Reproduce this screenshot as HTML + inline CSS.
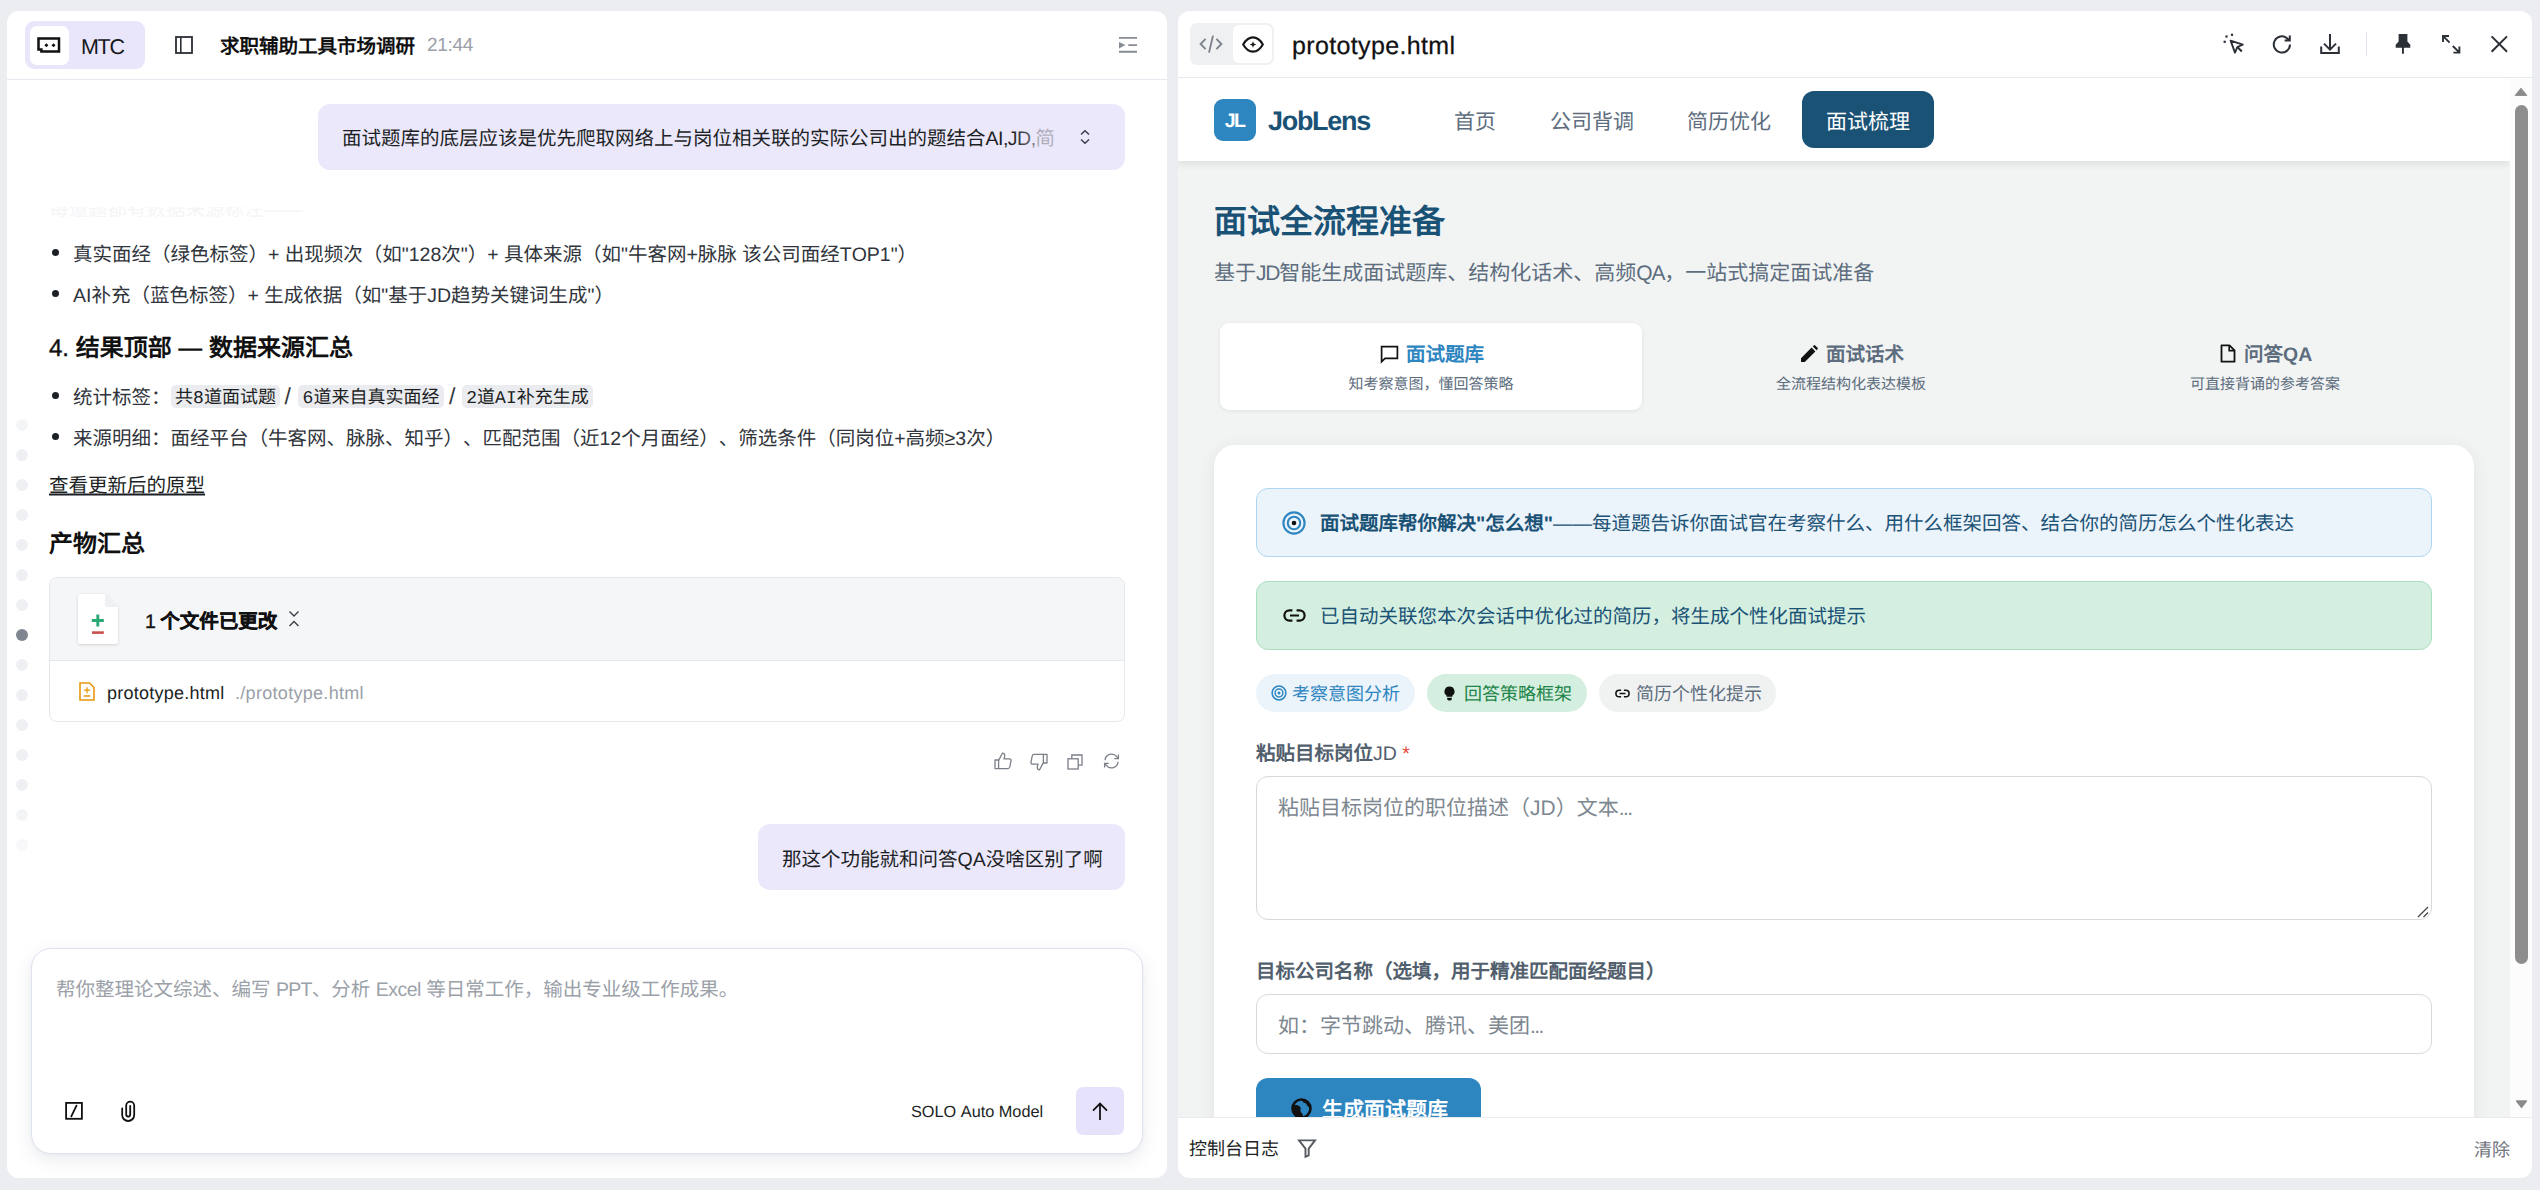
<!DOCTYPE html>
<html lang="zh-CN">
<head>
<meta charset="utf-8">
<title>prototype</title>
<style>
*{box-sizing:border-box;margin:0;padding:0}
html,body{width:2540px;height:1190px;overflow:hidden}
body{text-rendering:geometricPrecision;text-spacing-trim:space-all;font-kerning:none;background:#ecedf1;font-family:"Liberation Sans",sans-serif;color:#1f2329;position:relative}
.abs{position:absolute}
.t{position:absolute;white-space:nowrap;transform:translateY(1.5px)}
svg{position:absolute;overflow:visible}
#L{position:absolute;left:7px;top:11px;width:1160px;height:1167px;background:#fff;border-radius:12px;overflow:hidden}
#R{position:absolute;left:1178px;top:11px;width:1354px;height:1167px;background:#fff;border-radius:12px;overflow:hidden}
/* coordinates inside #L and #R are page coordinates via wrappers */
#Lw{position:absolute;left:-7px;top:-11px;width:2540px;height:1190px}
#Rw{position:absolute;left:-1178px;top:-11px;width:2540px;height:1190px}
.b{font-weight:bold}

.p{height:30px;line-height:30px;font-size:19.5px;color:#30343b}
.dot{width:7px;height:7px;border-radius:4px;background:#1c1f24}
.code{top:384.5px;height:23.5px;line-height:29px;overflow:hidden;border-radius:5px;background:#ebecef;font-family:"Liberation Mono",monospace;font-size:18px;color:#1c1f24;text-align:center;white-space:nowrap}

.nav{top:106px;height:30px;line-height:30px;font-size:21px;color:#5d6d7e}
.tsub{top:372px;height:22px;line-height:22px;font-size:15px;color:#5d6d7e;text-align:center}
.chip{top:674px;height:37.5px;border-radius:19px}
.ct{top:676.5px;height:30px;line-height:30px;font-size:18px}
.lab{height:30px;line-height:30px;font-size:19.5px;color:#52606e}
.ph{height:32px;line-height:32px;font-size:21px;color:#7d8790}
</style>
</head>
<body>
<div id="L"><div id="Lw">
<!-- header -->
<div class="abs" style="left:7px;top:79px;width:1160px;height:1px;background:#e7e9f0"></div>
<div class="abs" style="left:25px;top:21px;width:120px;height:48px;border-radius:9px;background:#e9e6fc"></div>
<div class="abs" style="left:30px;top:26px;width:39px;height:39px;border-radius:7px;background:#fff"></div>
<svg style="left:36px;top:35px" width="26" height="20" viewBox="0 0 26 20"><path d="M2.5 3.4H23V16.6H5.4V14.4H2.5Z" fill="none" stroke="#111" stroke-width="2.5"/><path d="M10.4 8.3l2 2-2 2-2-2zM17.5 8.3l2 2-2 2-2-2z" fill="#111"/></svg>
<div class="t" style="left:81px;top:29.6px;height:30px;line-height:30px;font-size:21.5px;letter-spacing:-1.3px;color:#15171a">MTC</div>
<svg style="left:175px;top:36px" width="18" height="18" viewBox="0 0 18 18"><rect x="1" y="1" width="16" height="16" fill="none" stroke="#2b2f36" stroke-width="1.8"/><path d="M5.8 1V17" stroke="#2b2f36" stroke-width="1.6"/></svg>
<div class="t b" style="left:220px;top:29.5px;height:30px;line-height:30px;font-size:19.5px;color:#111">求职辅助工具市场调研</div>
<div class="t" style="left:427px;top:29.3px;height:30px;line-height:30px;font-size:19px;color:#9a9fa8;letter-spacing:-0.3px">21:44</div>
<svg style="left:1118px;top:36px" width="20" height="18" viewBox="0 0 20 18"><path d="M1 1.9H19M10.3 9.1H19M1 15.8H19" stroke="#868b94" stroke-width="1.9" fill="none"/><path d="M1 5.9L7.4 9.1 1 12.4Z" fill="#868b94"/></svg>

<!-- user bubble 1 -->
<div class="abs" style="left:318px;top:104px;width:807px;height:66px;border-radius:12px;background:#ebe8fc"></div>
<div class="t" style="left:342px;top:122px;height:30px;line-height:30px;font-size:19.5px;color:#1c1f24;width:712px;overflow:hidden">面试题库的底层应该是优先爬取网络上与岗位相关联的实际公司出的题结合<span style="letter-spacing:-0.5px">AI,JD,</span>简</div>
<div class="abs" style="left:1012px;top:122px;width:44px;height:32px;background:linear-gradient(90deg,rgba(235,232,252,0),rgba(235,232,252,0.35) 45%,rgba(235,232,252,0.68) 60%,rgba(235,232,252,0.72))"></div>
<svg style="left:1079px;top:129px" width="12" height="16" viewBox="0 0 12 16"><path d="M2 5.5L6 1.8 10 5.5M2 10.5L6 14.2 10 10.5" fill="none" stroke="#3a3e46" stroke-width="1.5"/></svg>

<!-- faded remnant line -->
<div class="abs" style="left:49px;top:207px;width:300px;height:10px;overflow:hidden"><div class="t" style="left:0;top:-14px;height:30px;line-height:30px;font-size:19.5px;color:#f5f5f7">每道题都有数据来源标注——</div></div>

<!-- bullets -->
<div class="abs dot" style="left:52px;top:249px"></div>
<div class="t p" style="left:73px;top:238px">真实面经（绿色标签）+ 出现频次（如"128次"）+ 具体来源（如"牛客网+脉脉 该公司面经TOP1"）</div>
<div class="abs dot" style="left:52px;top:290px"></div>
<div class="t p" style="left:73px;top:279px">AI补充（蓝色标签）+ 生成依据（如"基于JD趋势关键词生成"）</div>

<div class="t b" style="left:49px;top:330px;height:34px;line-height:34px;font-size:24px;color:#111"><span style="font-weight:normal;-webkit-text-stroke:0.4px #111">4.</span> 结果顶部 — 数据来源汇总</div>

<div class="abs dot" style="left:52px;top:392px"></div>
<div class="t p" style="left:73px;top:381px">统计标签：</div>
<div class="abs code" style="left:171px;width:109px">共8道面试题</div>
<div class="t p" style="left:284.5px;top:379px;font-size:23px;color:#33373e">/</div>
<div class="abs code" style="left:298px;width:146px">6道来自真实面经</div>
<div class="t p" style="left:449px;top:379px;font-size:23px;color:#33373e">/</div>
<div class="abs code" style="left:462px;width:131px">2道AI补充生成</div>

<div class="abs dot" style="left:52px;top:433px"></div>
<div class="t p" style="left:73px;top:422px">来源明细：面经平台（牛客网、脉脉、知乎）、匹配范围（近12个月面经）、筛选条件（同岗位+高频≥3次）</div>

<div class="t p" style="left:49px;top:469px;text-decoration:underline;text-underline-offset:1.5px;text-decoration-thickness:1.6px;color:#1c1f24">查看更新后的原型</div>

<div class="t b" style="left:49px;top:526px;height:34px;line-height:34px;font-size:24px;color:#111">产物汇总</div>

<!-- file card -->
<div class="abs" style="left:49px;top:577px;width:1076px;height:145px;border:1px solid #e4e7ee;border-radius:8px;background:#fff;overflow:hidden">
  <div class="abs" style="left:0;top:0;width:1077px;height:83px;background:#f5f6f8;border-bottom:1px solid #e4e7ee"></div>
</div>
<svg style="left:78px;top:594px" width="40" height="50" viewBox="0 0 40 50"><defs><filter id="fs" x="-30%" y="-30%" width="160%" height="160%"><feDropShadow dx="0" dy="1" stdDeviation="1.6" flood-color="#000" flood-opacity="0.16"/></filter></defs><path d="M3 0H27L40 13V47Q40 50 37 50H3Q0 50 0 47V3Q0 0 3 0Z" fill="#fff" filter="url(#fs)"/><path d="M27 0L40 13H30Q27 13 27 10Z" fill="#eef0f3"/><path d="M13.8 26.5H25.8M19.8 20.5V32.5" stroke="#2aa876" stroke-width="2.9"/><path d="M14 38.6H25.8" stroke="#c9504e" stroke-width="2.6"/></svg>
<div class="t b" style="left:145px;top:605px;height:30px;line-height:30px;font-size:19.5px;color:#111;-webkit-text-stroke:0.35px #111"><span style="font-weight:normal;letter-spacing:-1px">1</span> 个文件已更改</div>
<svg style="left:288px;top:610px" width="12" height="18" viewBox="0 0 12 18"><path d="M1.5 1.5L6 6 10.5 1.5M1.5 16L6 11.5 10.5 16" fill="none" stroke="#3a3e46" stroke-width="1.4"/></svg>

<svg style="left:79px;top:682px" width="16" height="19" viewBox="0 0 16 19"><path d="M1 1H10.5L15 5.5V18H1Z" fill="none" stroke="#e8960c" stroke-width="1.6"/><path d="M4.8 8.2H11.2M8 5.2V11.2M4.8 14H11.2" stroke="#e8960c" stroke-width="1.3"/></svg>
<div class="t" style="left:107px;top:676px;height:30px;line-height:30px;font-size:18px;letter-spacing:0.25px;color:#1c1f24">prototype.html</div>
<div class="t" style="left:235px;top:676px;height:30px;line-height:30px;font-size:18px;letter-spacing:0.3px;color:#9a9fa8">./prototype.html</div>

<!-- action icons -->
<svg style="left:993.5px;top:752px" width="18" height="18" viewBox="0 0 18 18" fill="none" stroke="#7a7f88" stroke-width="1.3" stroke-linejoin="round"><path d="M1 8H4.6V16.6H1Z"/><path d="M4.6 8.4L8.4 1.2C10.4 1.2 11 2.8 10.6 4.4L10 6.8H15.4C16.6 6.8 17.2 7.8 17 8.8L15.8 15C15.6 16 14.8 16.6 13.8 16.6H4.6"/></svg>
<svg style="left:1029.5px;top:752.5px" width="18" height="18" viewBox="0 0 18 18" fill="none" stroke="#7a7f88" stroke-width="1.3" stroke-linejoin="round"><g transform="rotate(180 9 9)"><path d="M1 8H4.6V16.6H1Z"/><path d="M4.6 8.4L8.4 1.2C10.4 1.2 11 2.8 10.6 4.4L10 6.8H15.4C16.6 6.8 17.2 7.8 17 8.8L15.8 15C15.6 16 14.8 16.6 13.8 16.6H4.6"/></g></svg>
<svg style="left:1066.5px;top:753.5px" width="16" height="16" viewBox="0 0 16 16" fill="none" stroke="#7a7f88" stroke-width="1.3"><path d="M4.8 4.8V1H15V11.2H11.2"/><rect x="1" y="4.8" width="10.2" height="10.2"/></svg>
<svg style="left:1102.5px;top:753px" width="17" height="16" viewBox="0 0 17 16" fill="none" stroke="#7a7f88" stroke-width="1.3"><path d="M2 7.2A6.5 6.5 0 0 1 13.6 3.6L15.2 5.4M15.4 1.4V5.6H11.2"/><path d="M15 8.8A6.5 6.5 0 0 1 3.4 12.4L1.8 10.6M1.6 14.6V10.4H5.8"/></svg>

<!-- user bubble 2 -->
<div class="abs" style="left:758px;top:824px;width:367px;height:66px;border-radius:12px;background:#ebe8fc"></div>
<div class="t" style="left:782px;top:843px;height:30px;line-height:30px;font-size:19.5px;color:#1c1f24">那这个功能就和问答QA没啥区别了啊</div>

<!-- side dots -->
<div class="abs" style="left:16px;top:419px;width:12px;height:12px;border-radius:6px;background:#f4f5f7"></div><div class="abs" style="left:16px;top:449px;width:12px;height:12px;border-radius:6px;background:#eff0f3"></div><div class="abs" style="left:16px;top:479px;width:12px;height:12px;border-radius:6px;background:#eff0f3"></div><div class="abs" style="left:16px;top:509px;width:12px;height:12px;border-radius:6px;background:#eff0f3"></div><div class="abs" style="left:16px;top:539px;width:12px;height:12px;border-radius:6px;background:#eff0f3"></div><div class="abs" style="left:16px;top:569px;width:12px;height:12px;border-radius:6px;background:#eff0f3"></div><div class="abs" style="left:16px;top:599px;width:12px;height:12px;border-radius:6px;background:#eff0f3"></div><div class="abs" style="left:16px;top:629px;width:12px;height:12px;border-radius:6px;background:#7f8591"></div><div class="abs" style="left:16px;top:659px;width:12px;height:12px;border-radius:6px;background:#eff0f3"></div><div class="abs" style="left:16px;top:689px;width:12px;height:12px;border-radius:6px;background:#eff0f3"></div><div class="abs" style="left:16px;top:719px;width:12px;height:12px;border-radius:6px;background:#eff0f3"></div><div class="abs" style="left:16px;top:749px;width:12px;height:12px;border-radius:6px;background:#eff0f3"></div><div class="abs" style="left:16px;top:779px;width:12px;height:12px;border-radius:6px;background:#eff0f3"></div><div class="abs" style="left:16px;top:809px;width:12px;height:12px;border-radius:6px;background:#f3f4f6"></div><div class="abs" style="left:16px;top:839px;width:12px;height:12px;border-radius:6px;background:#f8f8fa"></div>

<!-- bottom fade + input -->
<div class="abs" style="left:7px;top:905px;width:1160px;height:45px;background:linear-gradient(180deg,rgba(255,255,255,0),#fff)"></div>
<div class="abs" style="left:31px;top:948px;width:1112px;height:206px;border:1px solid #dfe3ef;border-radius:20px;background:#fff;box-shadow:0 6px 18px rgba(60,70,110,0.10),0 1px 3px rgba(60,70,110,0.05)"></div>
<div class="t" style="left:56px;top:973px;height:30px;line-height:30px;font-size:19.5px;color:#9ba1a9">帮你整理论文综述、编写 <span style="letter-spacing:-0.7px">PPT</span>、分析 <span style="letter-spacing:-0.5px">Excel</span> 等日常工作，输出专业级工作成果。</div>
<svg style="left:64px;top:1101px" width="20" height="20" viewBox="0 0 20 20"><rect x="2.1" y="1.9" width="15.8" height="15.9" fill="none" stroke="#111" stroke-width="1.8"/><path d="M12.5 4.6L7.3 15.4" stroke="#111" stroke-width="1.8" stroke-linecap="round"/></svg>
<svg style="left:120px;top:1099px" width="16" height="24" viewBox="0 0 16 24" fill="none" stroke="#111" stroke-width="1.8" stroke-linecap="round"><g transform="translate(16.2,0) scale(-1,1)"><path d="M14 9.5V16A6 6 0 0 1 2 16V6.6A4 4 0 0 1 10 6.6V15.6A2 2 0 0 1 6 15.6V6.8"/></g></svg>
<div class="t" style="left:911px;top:1095px;height:30px;line-height:30px;font-size:16.3px;color:#1c1f24">SOLO Auto Model</div>
<div class="abs" style="left:1076px;top:1087px;width:48px;height:48px;border-radius:7px;background:#e6e2fc"></div>
<svg style="left:1091px;top:1102px" width="18" height="19" viewBox="0 0 18 19" fill="none" stroke="#111" stroke-width="1.8"><path d="M9 18V2M2 8.6L9 1.6 16 8.6"/></svg>

</div></div>
<div id="R"><div id="Rw">
<!-- iframe content area -->
<div class="abs" style="left:1177px;top:79px;width:1333px;height:1038px;background:#f2f4f4;overflow:hidden" id="ifr">
 <div id="ifw" class="abs" style="left:-1177px;top:-79px;width:2540px;height:1190px">
  <!-- app nav -->
  <div class="abs" style="left:1177px;top:79px;width:1333px;height:82px;background:#fff;box-shadow:0 2px 9px rgba(0,0,0,0.10)"></div>
  <div class="abs" style="left:1214px;top:99px;width:42px;height:42px;border-radius:9px;background:#2e86c1"></div>
  <div class="t b" style="left:1213.5px;top:98px;width:42px;height:42px;line-height:42px;text-align:center;font-size:19.5px;color:#fff;letter-spacing:-1.6px">JL</div>
  <div class="t b" id="logo" style="left:1268px;top:98px;height:42px;line-height:42px;font-size:27px;color:#1a5276;letter-spacing:-1.3px">JobLens</div>
  <div class="t nav" style="left:1454px">首页</div>
  <div class="t nav" style="left:1550px">公司背调</div>
  <div class="t nav" style="left:1687px">简历优化</div>
  <div class="abs" style="left:1802px;top:91px;width:132px;height:57px;border-radius:12px;background:#1a5276"></div>
  <div class="t nav" style="left:1826px;color:#fff">面试梳理</div>

  <!-- heading -->
  <div class="t b" style="left:1214px;top:197px;height:46px;line-height:46px;font-size:33px;color:#1a5276">面试全流程准备</div>
  <div class="t" id="sub" style="left:1214px;top:256px;height:32px;line-height:32px;font-size:21px;color:#5d6d7e">基于<span style="letter-spacing:-1.2px">JD</span>智能生成面试题库、结构化话术、高频<span style="letter-spacing:-1.2px">QA</span>，一站式搞定面试准备</div>

  <!-- tabs -->
  <div class="abs" style="left:1220px;top:323px;width:422px;height:87px;border-radius:9px;background:#fff;box-shadow:0 1px 4px rgba(0,0,0,0.08)"></div>
  <svg style="left:1380px;top:345px" width="19" height="19" viewBox="0 0 19 19"><path d="M1.6 1.6H17.4V13.4H5L1.6 16.8Z" fill="none" stroke="#111" stroke-width="1.7" stroke-linejoin="miter"/></svg>
  <div class="t b" style="left:1406px;top:338px;height:30px;line-height:30px;font-size:19.5px;color:#2e86c1">面试题库</div>
  <div class="t tsub" style="left:1220px;width:422px">知考察意图，懂回答策略</div>

  <svg style="left:1800px;top:345px" width="18" height="18" viewBox="0 0 18 18"><path d="M1 17V13.2L11.6 2.6 15.4 6.4 4.8 17ZM12.8 1.4L14 0.2Q14.6-0.2 15.2 0.4L17.6 2.8Q18.2 3.4 17.6 4L16.6 5.2Z" fill="#111"/></svg>
  <div class="t b" style="left:1826px;top:338px;height:30px;line-height:30px;font-size:19.5px;color:#5d6d7e">面试话术</div>
  <div class="t tsub" style="left:1640px;width:422px">全流程结构化表达模板</div>

  <svg style="left:2220px;top:344px" width="16" height="19" viewBox="0 0 16 19"><path d="M1.5 1.3H9.5L14.5 6.3V17.7H1.5Z" fill="none" stroke="#111" stroke-width="1.8" stroke-linejoin="round"/><path d="M9.2 1.6V6.6H14.2" fill="none" stroke="#111" stroke-width="1.6"/></svg>
  <div class="t b" id="qa" style="left:2244px;top:338px;height:30px;line-height:30px;font-size:19.5px;color:#5d6d7e">问答QA</div>
  <div class="t tsub" style="left:2054px;width:422px">可直接背诵的参考答案</div>

  <!-- main card -->
  <div class="abs" style="left:1214px;top:445px;width:1260px;height:800px;border-radius:21px;background:#fff;box-shadow:0 3px 18px rgba(0,0,0,0.07)"></div>

  <div class="abs" style="left:1256px;top:488px;width:1176px;height:69px;border-radius:12px;background:#ebf3fb;border:1px solid #aed6f1"></div>
  <svg style="left:1282px;top:511px" width="24" height="24" viewBox="0 0 24 24"><circle cx="12" cy="12" r="10.6" fill="none" stroke="#2e86c1" stroke-width="2.1"/><circle cx="12" cy="12" r="6.2" fill="none" stroke="#2e86c1" stroke-width="2.1"/><circle cx="12" cy="12" r="2.3" fill="#111"/></svg>
  <div class="t" id="info1" style="left:1320px;top:507px;height:30px;line-height:30px;font-size:19.5px;color:#1a5276"><b>面试题库帮你解决"怎么想"</b>——每道题告诉你面试官在考察什么、用什么框架回答、结合你的简历怎么个性化表达</div>

  <div class="abs" style="left:1256px;top:581px;width:1176px;height:69px;border-radius:12px;background:#d4efdf;border:1px solid #a9dfbf"></div>
  <svg style="left:1283px;top:609px" width="23" height="13" viewBox="0 0 23 13"><path d="M9.4 1.4H6.5A5.1 5.1 0 0 0 6.5 11.6H9.4M13.6 1.4H16.5A5.1 5.1 0 0 1 16.5 11.6H13.6M7 6.5H16" fill="none" stroke="#111" stroke-width="2.2"/></svg>
  <div class="t" style="left:1320px;top:600px;height:30px;line-height:30px;font-size:19.5px;color:#1a5276">已自动关联您本次会话中优化过的简历，将生成个性化面试提示</div>

  <!-- chips -->
  <div class="abs chip" style="left:1256px;width:159px;background:#ebf3fb"></div>
  <svg style="left:1271px;top:685px" width="16" height="16" viewBox="0 0 16 16"><circle cx="8" cy="8" r="6.9" fill="none" stroke="#2e86c1" stroke-width="1.5"/><circle cx="8" cy="8" r="3.9" fill="none" stroke="#2e86c1" stroke-width="1.5"/><circle cx="8" cy="8" r="1.5" fill="#2e86c1"/></svg>
  <div class="t ct" style="left:1292px;color:#2e86c1">考察意图分析</div>
  <div class="abs chip" style="left:1427px;width:160px;background:#d4efdf"></div>
  <svg style="left:1444px;top:686px" width="11" height="15" viewBox="0 0 11 15"><path d="M5.5 0.4A5 5 0 0 0 2.6 9.5V10.8H8.4V9.5A5 5 0 0 0 5.5 0.4ZM3.2 11.8H7.8V13Q7.8 14.4 6.4 14.4H4.6Q3.2 14.4 3.2 13Z" fill="#111"/></svg>
  <div class="t ct" style="left:1464px;color:#1e8449">回答策略框架</div>
  <div class="abs chip" style="left:1599px;width:177px;background:#f0f2f2"></div>
  <svg style="left:1615px;top:689px" width="15" height="9" viewBox="0 0 23 13"><path d="M9.4 1.4H6.5A5.1 5.1 0 0 0 6.5 11.6H9.4M13.6 1.4H16.5A5.1 5.1 0 0 1 16.5 11.6H13.6M7 6.5H16" fill="none" stroke="#111" stroke-width="2.4"/></svg>
  <div class="t ct" style="left:1636px;color:#5d6d7e">简历个性化提示</div>

  <!-- form -->
  <div class="t b lab" style="left:1256px;top:737px">粘贴目标岗位<span id="jd" style="font-weight:normal">JD</span> <span style="color:#e74c3c;font-weight:normal">*</span></div>
  <div class="abs" style="left:1256px;top:776px;width:1176px;height:144px;border-radius:12px;background:#fff;border:1px solid #d5d8dc"></div>
  <div class="t ph" style="left:1278px;top:791px">粘贴目标岗位的职位描述（JD）文本<span style="letter-spacing:-1.6px">...</span></div>
  <svg style="left:2417px;top:906px" width="12" height="12" viewBox="0 0 12 12"><path d="M1 11L11 1M6.5 11L11 6.5" stroke="#444" stroke-width="1.3"/></svg>
  <div class="t b lab" style="left:1256px;top:955px">目标公司名称（选填，用于精准匹配面经题目）</div>
  <div class="abs" style="left:1256px;top:994px;width:1176px;height:60px;border-radius:12px;background:#fff;border:1px solid #d5d8dc"></div>
  <div class="t ph" style="left:1278px;top:1009px">如：字节跳动、腾讯、美团<span style="letter-spacing:-1.6px">...</span></div>

  <div class="abs" style="left:1256px;top:1078px;width:225px;height:60px;border-radius:12px;background:#2e86c1"></div>
  <svg style="left:1291px;top:1098px" width="21" height="21" viewBox="0 0 21 21"><circle cx="10.5" cy="10.5" r="9" fill="#2e86c1" stroke="#111" stroke-width="2.6"/><path d="M3.2 7.2C6 6.4 8.4 7.4 9.4 9.2 10.2 10.8 9 11.8 9.6 13.4 10.2 15 12.2 15.4 11.8 17.6 11.6 18.6 10.8 19.4 10.2 19.6 5.6 19.4 2 15.6 1.6 11 1.6 9.6 2.2 8.2 3.2 7.2ZM11.4 1.6C11 3.2 12.2 4.6 14 5 15.8 5.4 15.4 7.4 17 8.4 18 9 19 8.6 19.4 8.2 18.6 4.6 15.4 1.8 11.4 1.6Z" fill="#111"/></svg>
  <div class="t b" style="left:1322px;top:1093px;height:32px;line-height:32px;font-size:21px;color:#fff">生成面试题库</div>
 </div>
</div>

<!-- scrollbar -->
<div class="abs" style="left:2510px;top:79px;width:23px;height:1038px;background:#fcfcfc"></div>
<svg style="left:2514px;top:87px" width="14" height="9" viewBox="0 0 14 9"><path d="M1.2 8.4L7 1.2 12.8 8.4Z" fill="#8b8b8b" stroke="#8b8b8b" stroke-width="1" stroke-linejoin="round"/></svg>
<div class="abs" style="left:2515px;top:105px;width:13px;height:859px;border-radius:6.5px;background:#8d8d8d"></div>
<svg style="left:2514.5px;top:1099.5px" width="13" height="9" viewBox="0 0 13 9"><path d="M1.6 1L6.5 7.4 11.4 1Z" fill="#8a8a8a" stroke="#8a8a8a" stroke-width="1.4" stroke-linejoin="round"/></svg>

<!-- header -->
<div class="abs" style="left:1177px;top:11px;width:1356px;height:66px;background:#fff"></div>
<div class="abs" style="left:1177px;top:77px;width:1356px;height:1px;background:#e7e9f0"></div>
<div class="abs" style="left:1190px;top:23px;width:84px;height:42px;border-radius:7px;background:#eff0f2"></div>
<div class="abs" style="left:1233px;top:25px;width:39px;height:38px;border-radius:6px;background:#fff"></div>
<svg style="left:1199px;top:35px" width="24" height="18" viewBox="0 0 24 18" fill="none" stroke="#7d838d" stroke-width="1.9"><path d="M6.6 3.8L1.6 9 6.6 14.2M17.4 3.8L22.4 9 17.4 14.2M14 0.6L10 17.6"/></svg>
<svg style="left:1242px;top:35.5px" width="22" height="17" viewBox="0 0 22 17"><path d="M1.2 8.5C3.8 3.8 7 1.4 11 1.4S18.2 3.8 20.8 8.5C18.2 13.2 15 15.6 11 15.6S3.8 13.2 1.2 8.5Z" fill="none" stroke="#15171a" stroke-width="2.1"/><path d="M11 5.2l0.9 2.4 2.4 0.9-2.4 0.9-0.9 2.4-0.9-2.4-2.4-0.9 2.4-0.9z" fill="#15171a"/></svg>
<div class="t" id="ptitle" style="left:1292px;top:25.5px;height:36px;line-height:36px;font-size:25px;letter-spacing:0.35px;color:#111;-webkit-text-stroke:0.25px #111">prototype.html</div>

<svg style="left:2210px;top:20px" width="320" height="50" viewBox="0 0 320 50" fill="none" stroke="#2b2f36" stroke-width="2">
<g><path d="M20.6 20.6L32.8 24.6 27.4 27 25 32.6Z" stroke-linejoin="round" stroke-width="1.9"/><path d="M27.2 26.8L31.8 31.4" stroke-width="2.1"/><rect x="15.4" y="15.4" width="2.2" height="2.2" fill="#2b2f36" stroke="none"/><rect x="20.9" y="13.7" width="2.2" height="2.2" fill="#2b2f36" stroke="none"/><rect x="13.6" y="20.7" width="2.2" height="2.2" fill="#2b2f36" stroke="none"/></g>
<path d="M80 24.6A8.1 8.1 0 1 1 77 18.2L79.6 20.4M79.8 15.4V20.4H74.6" stroke-width="2"/>
<path d="M120 14V29.4M114 23.6L120 29.6 126 23.6M111.2 26.6V33H128.8V26.6" stroke-width="2"/>
<path d="M156.5 12V36" stroke="#e1e4ec" stroke-width="1"/>
<path d="M188.6 14.1H197.4V21.4L200.3 24.8V27.7H193.9V33.8H192V27.7H185.7V24.8L188.6 21.4Z" fill="#2b2f36" stroke="none"/>
<path d="M233 22V16H239M233.4 16.4L239.6 22.6M249.4 26.6V32.6H243.4M249 32.2L242.8 26" stroke-width="1.9"/>
<path d="M281.6 16.4L297 31.8M297 16.4L281.6 31.8" stroke-width="2"/>
</svg>

<!-- console bar -->
<div class="abs" style="left:1177px;top:1117px;width:1356px;height:60px;background:#fff;border-top:1px solid #e9ebee"></div>
<div class="t" style="left:1189px;top:1132px;height:30px;line-height:30px;font-size:18px;color:#1c1f24">控制台日志</div>
<svg style="left:1297px;top:1138px" width="20" height="20" viewBox="0 0 20 20"><path d="M2 2.4H18L11.7 10.6V17.4L8.5 18.8V10.6Z" fill="none" stroke="#555a61" stroke-width="1.9" stroke-linejoin="miter"/></svg>
<div class="t" style="left:2474px;top:1133px;height:30px;line-height:30px;font-size:18px;color:#70757d">清除</div>

</div></div>
</body>
</html>
